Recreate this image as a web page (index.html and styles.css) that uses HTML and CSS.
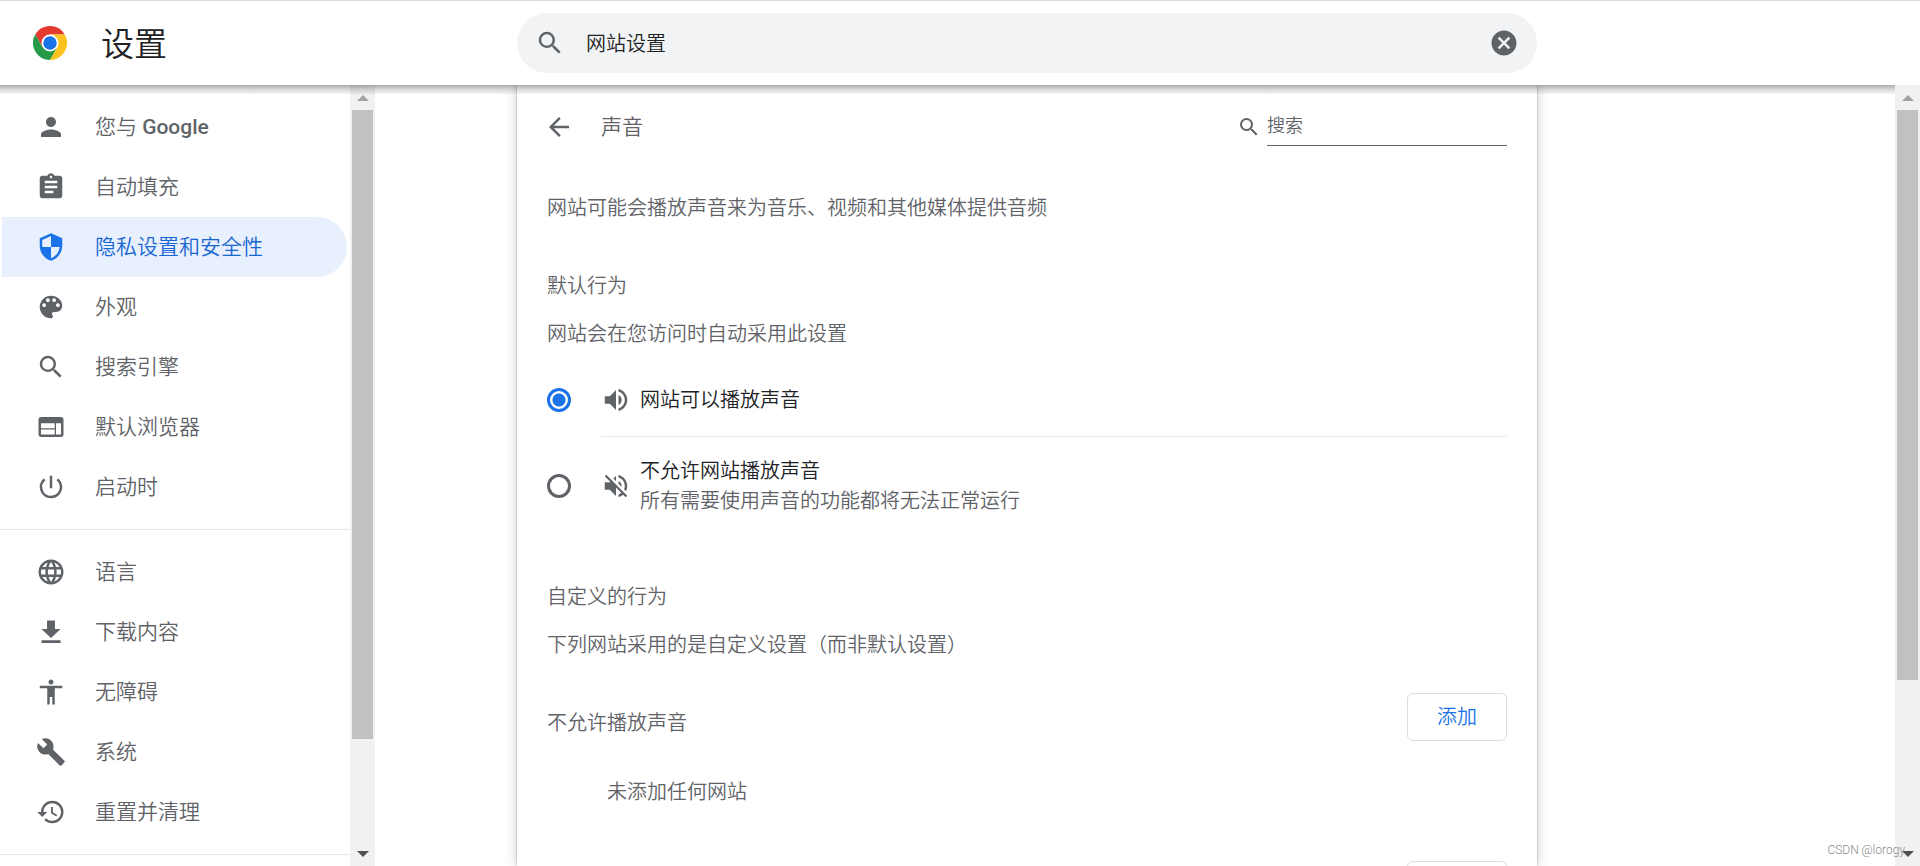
FILE: index.html
```html
<!DOCTYPE html>
<html lang="zh-CN">
<head>
<meta charset="utf-8">
<title>设置</title>
<link rel="stylesheet" href="styles.css">
</head>
<body>
<header class="toolbar">
  <div class="brand">
    <svg class="logo" viewBox="0 0 48 48" aria-hidden="true">
      <path fill="#e33b2e" d="M24 12H44.8A24 24 0 0 0 3.2 12L13.6 30 24 24z"/>
      <path fill="#269a48" d="M3.2 12 13.6 30 24 24 34.4 30 24 48A24 24 0 0 1 3.2 12z"/>
      <path fill="#fcc31e" d="M24 12H44.8A24 24 0 0 1 24 48L34.4 30z"/>
      <circle cx="24" cy="24" r="12" fill="#fff"/>
      <circle cx="24" cy="24" r="9.5" fill="#1a73e8"/>
    </svg>
    <h1 class="brand-title">设置</h1>
  </div>
  <form class="search" role="search">
    <svg class="icon" viewBox="0 0 24 24" aria-hidden="true"><path d="M15.5 14h-.79l-.28-.27A6.47 6.47 0 0 0 16 9.5 6.5 6.5 0 1 0 9.5 16c1.61 0 3.09-.59 4.23-1.57l.27.28v.79l5 4.99L20.49 19l-4.99-5zm-6 0C7.01 14 5 11.99 5 9.5S7.01 5 9.5 5 14 7.01 14 9.5 11.99 14 9.5 14z"/></svg>
    <input class="search-input" type="text" value="网站设置" aria-label="在设置中搜索">
    <button class="icon-button" type="button" aria-label="清除搜索内容">
      <svg class="icon" viewBox="0 0 24 24" aria-hidden="true"><path d="M12 2C6.47 2 2 6.47 2 12s4.47 10 10 10 10-4.47 10-10S17.53 2 12 2zm5 13.59L15.59 17 12 13.41 8.41 17 7 15.59 10.59 12 7 8.41 8.41 7 12 10.59 15.59 7 17 8.41 13.41 12 17 15.59z"/></svg>
    </button>
  </form>
</header>

<div class="content">
  <div class="side">
    <nav class="menu" aria-label="设置菜单">
      <div class="menu-group">
        <a class="menu-item" href="#people"><svg class="icon" viewBox="0 0 24 24"><path d="M12 12c2.21 0 4-1.79 4-4s-1.79-4-4-4-4 1.790-4 4 1.790 4 4 4zm0 2c-2.670 0-8 1.340-8 4v2h16v-2c0-2.660-5.330-4-8-4z"/></svg><span>您与 <span class="latin">Google</span></span></a>
        <a class="menu-item" href="#autofill"><svg class="icon" viewBox="0 0 24 24"><path d="M19 3h-4.180C14.400 1.840 13.300 1 12 1c-1.300 0-2.400.84-2.820 2H5c-1.100 0-2 .9-2 2v14c0 1.100.9 2 2 2h14c1.100 0 2-.9 2-2V5c0-1.100-.9-2-2-2zm-7 0c.55 0 1 .45 1 1s-.45 1-1 1-1-.45-1-1 .45-1 1-1zm2 14H7v-2h7v2zm3-4H7v-2h10v2zm0-4H7V7h10v2z"/></svg><span>自动填充</span></a>
        <a class="menu-item selected" href="#privacy" aria-current="page"><svg class="icon" viewBox="0 0 24 24"><path d="M12 1 3 5v6c0 5.550 3.840 10.740 9 12 5.160-1.260 9-6.450 9-12V5l-9-4zm0 10.990h7c-.53 4.120-3.280 7.790-7 8.940V12H5V6.300l7-3.110v8.800z"/></svg><span>隐私设置和安全性</span></a>
        <a class="menu-item" href="#appearance"><svg class="icon" viewBox="0 0 24 24"><path d="M12 3a9 9 0 0 0 0 18c.83 0 1.500-.67 1.500-1.500 0-.39-.15-.74-.39-1.010-.23-.26-.38-.61-.38-.99 0-.83.67-1.500 1.500-1.500H16c2.760 0 5-2.240 5-5 0-4.420-4.030-8-9-8zm-5.500 9c-.83 0-1.500-.67-1.500-1.500S5.670 9 6.500 9 8 9.670 8 10.500 7.330 12 6.500 12zm3-4C8.670 8 8 7.330 8 6.500S8.670 5 9.500 5s1.500.67 1.500 1.500S10.330 8 9.500 8zm5 0c-.83 0-1.500-.67-1.500-1.500S13.670 5 14.500 5s1.500.67 1.500 1.500S15.330 8 14.500 8zm3 4c-.83 0-1.500-.67-1.500-1.500S16.670 9 17.500 9s1.500.67 1.500 1.500-.67 1.500-1.500 1.500z"/></svg><span>外观</span></a>
        <a class="menu-item" href="#search"><svg class="icon" viewBox="0 0 24 24"><path d="M15.5 14h-.79l-.28-.27A6.47 6.47 0 0 0 16 9.5 6.5 6.5 0 1 0 9.5 16c1.61 0 3.09-.59 4.23-1.57l.27.28v.79l5 4.99L20.49 19l-4.99-5zm-6 0C7.01 14 5 11.99 5 9.5S7.01 5 9.5 5 14 7.01 14 9.5 11.99 14 9.5 14z"/></svg><span>搜索引擎</span></a>
        <a class="menu-item" href="#browser"><svg class="icon" viewBox="0 0 24 24"><path d="M20 4H4c-1.100 0-1.990.9-1.990 2L2 18c0 1.100.9 2 2 2h16c1.100 0 2-.9 2-2V6c0-1.100-.9-2-2-2zm-5 14H4v-4h11v4zm0-5H4V9h11v4zm5 5h-4V9h4v9z"/></svg><span>默认浏览器</span></a>
        <a class="menu-item" href="#startup"><svg class="icon" viewBox="0 0 24 24"><path d="M13 3h-2v10h2V3zm4.830 2.170-1.420 1.420A6.920 6.920 0 0 1 19 12c0 3.870-3.130 7-7 7A6.995 6.995 0 0 1 7.580 6.580L6.170 5.170A8.932 8.932 0 0 0 3 12a9 9 0 0 0 18 0c0-2.740-1.230-5.180-3.170-6.830z"/></svg><span>启动时</span></a>
      </div>
      <div class="menu-group">
        <a class="menu-item" href="#languages"><svg class="icon" viewBox="0 0 24 24"><path d="M11.990 2C6.470 2 2 6.480 2 12s4.470 10 9.990 10C17.520 22 22 17.520 22 12S17.520 2 11.990 2zm6.930 6h-2.950a15.650 15.650 0 0 0-1.380-3.560A8.030 8.030 0 0 1 18.920 8zM12 4.040c.83 1.200 1.480 2.530 1.910 3.960h-3.820c.43-1.430 1.080-2.760 1.910-3.960zM4.260 14C4.100 13.360 4 12.690 4 12s.1-1.360.26-2h3.380c-.08.66-.14 1.320-.14 2s.06 1.340.14 2H4.260zm.82 2h2.950c.32 1.250.78 2.450 1.380 3.560A7.987 7.987 0 0 1 5.080 16zm2.950-8H5.080a7.987 7.987 0 0 1 4.330-3.560A15.650 15.650 0 0 0 8.030 8zM12 19.960c-.83-1.200-1.480-2.530-1.910-3.960h3.820c-.43 1.430-1.080 2.760-1.910 3.960zM14.340 14H9.660c-.09-.66-.16-1.320-.16-2s.07-1.350.16-2h4.680c.09.65.16 1.320.16 2s-.07 1.340-.16 2zm.25 5.560c.6-1.110 1.060-2.310 1.380-3.560h2.950a8.030 8.030 0 0 1-4.330 3.560zM16.360 14c.08-.66.14-1.320.14-2s-.06-1.340-.14-2h3.380c.16.64.26 1.310.26 2s-.1 1.360-.26 2h-3.380z"/></svg><span>语言</span></a>
        <a class="menu-item" href="#downloads"><svg class="icon" viewBox="0 0 24 24"><path d="M20.500 9.500h-5V2h-7v7.500h-5L12 17.500zM3.500 19.500v2.500h17v-2.500z" transform="translate(1.200 1) scale(.9)"/></svg><span>下载内容</span></a>
        <a class="menu-item" href="#accessibility"><svg class="icon" viewBox="0 0 24 24"><path d="M12 2c1.100 0 2 .9 2 2s-.9 2-2 2-2-.9-2-2 .9-2 2-2zm9 7h-6v13h-2v-6h-2v6H9V9H3V7h18v2z"/></svg><span>无障碍</span></a>
        <a class="menu-item" href="#system"><svg class="icon" viewBox="0 0 24 24"><path d="m22.700 19-9.100-9.100c.9-2.300.4-5-1.500-6.900-2-2-5-2.400-7.400-1.300L9 6 6 9 1.600 4.700C.4 7.100.9 10.100 2.900 12.100c1.900 1.900 4.600 2.400 6.900 1.500l9.100 9.100c.4.4 1 .4 1.400 0l2.300-2.300c.5-.4.5-1.100.1-1.400z"/></svg><span>系统</span></a>
        <a class="menu-item" href="#reset"><svg class="icon" viewBox="0 0 24 24"><path d="M13 3a9 9 0 0 0-9 9H1l3.890 3.890.07.14L9 12H6c0-3.870 3.130-7 7-7s7 3.130 7 7-3.130 7-7 7c-1.930 0-3.680-.79-4.940-2.060l-1.420 1.420A8.954 8.954 0 0 0 13 21a9 9 0 0 0 0-18zm-1 5v5l4.280 2.540.72-1.210-3.500-2.080V8H12z"/></svg><span>重置并清理</span></a>
      </div>
      <div class="menu-group"></div>
    </nav>
    <div class="scrollbar" aria-hidden="true">
      <span class="arrow arrow-up"></span>
      <span class="track"><span class="thumb thumb-side"></span></span>
      <span class="arrow arrow-down"></span>
    </div>
  </div>

  <main class="card">
    <div class="card-head">
      <button class="icon-button" type="button" aria-label="返回"><svg class="icon" viewBox="0 0 24 24"><path d="M20 11H7.830l5.590-5.590L12 4l-8 8 8 8 1.410-1.410L7.830 13H20v-2z"/></svg></button>
      <h2 class="card-title">声音</h2>
      <label class="filter">
        <svg class="icon small" viewBox="0 0 24 24" aria-hidden="true"><path d="M15.5 14h-.79l-.28-.27A6.47 6.47 0 0 0 16 9.5 6.5 6.5 0 1 0 9.5 16c1.61 0 3.09-.59 4.23-1.57l.27.28v.79l5 4.99L20.49 19l-4.99-5zm-6 0C7.01 14 5 11.99 5 9.5S7.01 5 9.5 5 14 7.01 14 9.5 11.99 14 9.5 14z"/></svg>
        <input class="filter-input" type="text" placeholder="搜索" aria-label="搜索">
      </label>
    </div>
    <p class="intro">网站可能会播放声音来为音乐、视频和其他媒体提供音频</p>

    <section class="section">
      <h3 class="section-title">默认行为</h3>
      <p class="section-text">网站会在您访问时自动采用此设置</p>
      <div class="options">
        <div class="option">
          <input class="radio" type="radio" name="sound" id="allow" checked>
          <label class="option-label" for="allow">
            <svg class="icon" viewBox="0 0 24 24"><path d="M3 9v6h4l5 5V4L7 9H3zm13.500 3A4.500 4.500 0 0 0 14 7.970v8.050c1.480-.73 2.500-2.250 2.500-4.020zM14 3.230v2.060c2.890.86 5 3.540 5 6.710s-2.110 5.850-5 6.710v2.060c4.010-.91 7-4.490 7-8.770s-2.990-7.860-7-8.770z"/></svg>
            <span class="option-text">网站可以播放声音</span>
          </label>
        </div>
        <div class="option tall">
          <input class="radio" type="radio" name="sound" id="block">
          <label class="option-label" for="block">
            <svg class="icon" viewBox="0 0 24 24"><path d="M16.500 12A4.500 4.500 0 0 0 14 7.970v2.210l2.450 2.450c.03-.2.050-.41.050-.63zm2.500 0c0 .94-.2 1.820-.54 2.640l1.510 1.510A8.796 8.796 0 0 0 21 12c0-4.280-2.990-7.860-7-8.770v2.060c2.890.86 5 3.540 5 6.710zM4.270 3 3 4.270 7.730 9H3v6h4l5 5v-6.730l4.250 4.250c-.67.52-1.420.93-2.250 1.180v2.060a8.990 8.990 0 0 0 3.690-1.810L19.730 21 21 19.730l-9-9L4.270 3zM12 4 9.910 6.090 12 8.180V4z"/></svg>
            <span class="option-text">不允许网站播放声音<span class="option-note">所有需要使用声音的功能都将无法正常运行</span></span>
          </label>
        </div>
      </div>
    </section>

    <section class="section custom">
      <h3 class="section-title">自定义的行为</h3>
      <p class="section-text">下列网站采用的是自定义设置（而非默认设置）</p>
      <div class="sites">
        <div class="sites-head">
          <h4 class="sites-title">不允许播放声音</h4>
          <button class="add" type="button">添加</button>
        </div>
        <p class="sites-empty">未添加任何网站</p>
      </div>
      <div class="sites">
        <div class="sites-head">
          <button class="add" type="button" aria-label="添加"></button>
        </div>
      </div>
    </section>
  </main>

  <div class="scrollbar page-scrollbar" aria-hidden="true">
    <span class="arrow arrow-up"></span>
    <span class="track"><span class="thumb thumb-page"></span></span>
    <span class="arrow arrow-down"></span>
  </div>
  <span class="watermark">CSDN @lorogy</span>
</div>
</body>
</html>
```
FILE: styles.css
```css
* { box-sizing: border-box; }

body {
  margin: 0;
  height: 100vh;
  display: flex;
  flex-direction: column;
  overflow: hidden;
  background: #fff;
  color: #5f6368;
  font-family: Roboto, "Noto Sans CJK SC", sans-serif;
  font-size: 20px;
  font-weight: 350;
  line-height: 30px;
}

h1, h2, h3, h4, p { margin: 0; font-size: inherit; font-weight: inherit; }
input, button { font: inherit; color: inherit; }

.icon { width: 30px; height: 30px; flex: none; display: block; fill: #5f6368; }
.icon.small { width: 24px; height: 24px; }
.icon-button { border: 0; padding: 0; background: none; cursor: pointer; }

/* Toolbar */
.toolbar {
  flex: none;
  display: grid;
  grid-template-columns: 517fr minmax(0, 1020px) 383fr;
  align-items: center;
  height: 85px;
  border-top: 1px solid #dadada;
}
.brand { display: flex; align-items: center; gap: 34px; padding-left: 33px; }
.logo { width: 34px; height: 34px; }
.brand-title { padding-top: 4px; font-size: 33px; line-height: 48px; color: #202124; }
.search {
  display: flex;
  align-items: center;
  height: 60px;
  padding: 0 18px;
  border-radius: 30px;
  background: #f1f3f4;
}
.search-input {
  flex: 1;
  min-width: 0;
  margin-left: 21px;
  padding: 2px 0 0;
  border: 0;
  outline: 0;
  background: none;
  color: #202124;
}

/* Content area under the toolbar */
.content {
  position: relative;
  flex: 1;
  min-height: 0;
  display: grid;
  grid-template-columns: 517fr minmax(0, 1020px) 358fr 25px;
  grid-template-rows: minmax(0, 1fr);
}
.content::before {
  content: "";
  position: absolute;
  z-index: 1;
  inset: 0 25px auto 0;
  height: 9px;
  background: linear-gradient(rgba(0, 0, 0, .32), rgba(0, 0, 0, .15) 50%, rgba(0, 0, 0, .04));
}

/* Side menu */
.side { display: flex; width: 375px; overflow: hidden; }
.menu { flex: 1; overflow: hidden; }
.menu-group { padding: 12px 3px 12px 2px; }
.menu-group + .menu-group { border-top: 1px solid #e8e8e8; }
.menu-item {
  display: flex;
  align-items: center;
  gap: 29px;
  height: 60px;
  padding-left: 34px;
  border-radius: 0 30px 30px 0;
  color: #5f6368;
  font-size: 21px;
  text-decoration: none;
}
.latin { font-weight: 500; }
.selected { background: #e8f0fe; color: #1967d2; }
.selected .icon { fill: #1a73e8; }

/* Scrollbars */
.scrollbar { display: flex; flex-direction: column; width: 25px; background: #f1f1f1; }
.page-scrollbar { grid-column: 4; }
.arrow { flex: none; height: 25px; display: grid; place-items: center; }
.arrow::before { content: ""; border: 6px solid transparent; }
.arrow-up::before { border-top: 0; border-bottom-color: #a3a3a3; }
.arrow-down::before { border-bottom: 0; border-top-color: #505050; }
.track { flex: 1; padding: 0 2px; }
.thumb { display: block; background: #c1c1c1; }
.thumb-side { height: 86%; }
.thumb-page { height: 78%; }

/* Card */
.card {
  padding: 0 30px;
  box-shadow: 0 0 2px rgba(60, 64, 67, .4), 0 0 12px rgba(60, 64, 67, .25);
  clip-path: inset(0 -20px);
}
.card-head { display: flex; align-items: center; height: 84px; margin-left: -3px; }
.card-title { flex: 1; margin-left: 27px; font-size: 21px; }
.filter { display: flex; align-items: center; gap: 6px; }
.filter-input {
  width: 240px;
  height: 38px;
  padding: 0 0 2px;
  border: 0;
  border-bottom: 1px solid #5f6368;
  outline: 0;
  background: none;
  font-size: 18px;
}
.filter-input::placeholder { color: #5f6368; opacity: 1; }
.intro { padding: 24px 0 48px; }

.section-title { margin-bottom: 18px; }
.options { padding-top: 15px; }
.option { display: flex; align-items: stretch; height: 72px; }
.tall { height: 99px; }
.radio {
  appearance: none;
  align-self: center;
  flex: none;
  width: 24px;
  height: 24px;
  margin: 0;
  border: 3px solid #5f6368;
  border-radius: 50%;
}
.radio:checked {
  border-color: #1a73e8;
  background: radial-gradient(circle, #1a73e8 6px, #fff 7px);
}
.option-label {
  flex: 1;
  display: flex;
  align-items: center;
  gap: 9px;
  margin-left: 30px;
}
.option + .option .option-label { border-top: 1px solid #e8e8e8; }
.option-text { color: #202124; }
.option-note { display: block; color: #5f6368; }

.custom { padding-top: 47px; }
.sites { padding-top: 33px; }
.sites + .sites { padding-top: 54px; }
.sites-head { display: flex; align-items: flex-start; }
.sites-title { padding-top: 15px; }
.add {
  width: 100px;
  height: 48px;
  margin-left: auto;
  padding: 0;
  border: 1px solid #dadce0;
  border-radius: 6px;
  background: #fff;
  color: #1a73e8;
}
.sites-empty { padding: 36px 0 0 60px; }

.watermark {
  position: absolute;
  right: 15px;
  bottom: 8px;
  color: #8a8a8a;
  font: 300 12px/16px Roboto, sans-serif;
}
```
